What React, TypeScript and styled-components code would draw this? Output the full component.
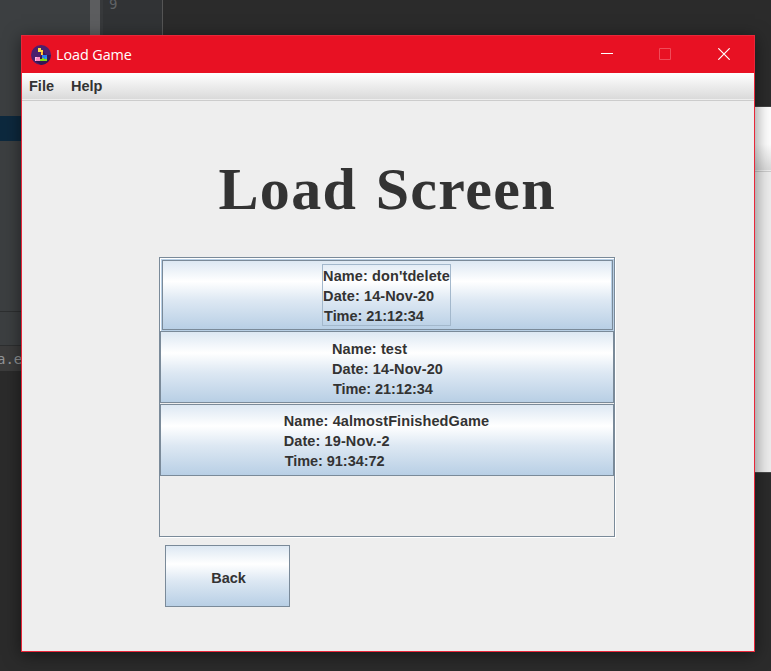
import React from "react";
import styled, { createGlobalStyle } from "styled-components";

const GlobalStyle = createGlobalStyle`
  body { margin: 0; background: #2b2b2b; overflow: hidden; }
  * { box-sizing: border-box; }
`;

const Desktop = styled.div`
  position: relative;
  display: flex;
  width: 771px;
  height: 671px;
  overflow: hidden;
  background: #2b2b2b;
`;

const SidePanel = styled.div`
  width: 90px;
  height: 371px;
  background: #3c3f41;
  display: flex;
  flex-direction: column;
`;

const PanelSection = styled.div<{ $h: number; $bg?: string; $line?: boolean }>`
  height: ${(p) => p.$h}px;
  flex: none;
  background: ${(p) => p.$bg ?? "#3c3f41"};
  border-bottom: ${(p) => (p.$line ? "1px solid #2d2f30" : "none")};
  font: 14px/26px "DejaVu Sans Mono", monospace;
  color: #929496;
  white-space: pre;
`;

const TabText = styled.span`
  margin-left: -3px;
`;

const Scrollbar = styled.div`
  width: 10px;
  height: 371px;
  background: #5c5d5f;
`;

const Gutter = styled.div`
  width: 63px;
  height: 371px;
  border-left: 3px solid #37393b;
  border-right: 1px solid #555;
  background: #313335;
  color: #606366;
  font: 14px/16px "DejaVu Sans Mono", monospace;
  padding-left: 6px;
`;

const LineNumber = styled.div`
  margin-top: -4px;
`;

const RearWindow = styled.div`
  position: absolute;
  left: 700px;
  top: 106px;
  width: 90px;
  height: 367px;
  border-top: 1px solid #444;
  border-bottom: 1px solid #4a4a4a;
  background: #eee;
`;

const RearTitle = styled.div`
  height: 37px;
  background: #fff;
`;

const RearMenu = styled.div`
  height: 28px;
  background: linear-gradient(#fff, #dadada 26px, #eee 26px, #eee 27px, #ccc 27px);
`;

const Window = styled.div`
  position: absolute;
  left: 21px;
  top: 35px;
  width: 734px;
  height: 617px;
  display: flex;
  flex-direction: column;
  border: 1px solid #e8273a;
  background: #eee;
  box-shadow: 0 3px 16px rgba(0, 0, 0, 0.5);
`;

const TitleBar = styled.div`
  height: 37px;
  flex: none;
  display: flex;
  align-items: center;
  padding-left: 9px;
  background: #e81123;
  color: #fff;
`;

const Caption = styled.div`
  margin: 0 auto 0 5px;
  font: 14.4px/20px "Open Sans", sans-serif;
  letter-spacing: -0.08px;
`;

const Control = styled.div<{ $w: number }>`
  width: ${(p) => p.$w}px;
  height: 36px;
  display: flex;
  align-self: flex-start;
  align-items: center;
  justify-content: center;
`;

const MenuBar = styled.div`
  height: 28px;
  flex: none;
  display: flex;
  gap: 17px;
  padding-left: 7px;
  background: linear-gradient(#fff, #dadada 26px, #eee 26px, #eee 27px, #ccc 27px);
  font: bold 14.5px/26px "Liberation Sans", Arial, sans-serif;
  color: #333;
`;

const Heading = styled.h1`
  margin: 54px 0 0 196.5px;
  height: 69px;
  font: bold 60px/69px "Liberation Serif", "Times New Roman", serif;
  letter-spacing: 1.35px;
  word-spacing: 2px;
  color: #333;
  white-space: nowrap;
`;

const SaveList = styled.div`
  width: 456px;
  height: 280px;
  margin: 33px 0 0 137px;
  flex: none;
  display: flex;
  flex-direction: column;
  border: 1px solid #7a8a99;
  box-shadow: 1px 1px 0 #fff;
`;

const MetalButton = styled.button`
  display: flex;
  align-items: center;
  justify-content: center;
  padding: 0;
  margin: 0;
  border: 1px solid #7a8a99;
  border-radius: 0;
  background: linear-gradient(#dde8f3, #fff 30%, #dde8f3 58%, #b8cfe5);
  color: #333;
  font: bold 14.5px/20px "Liberation Sans", Arial, sans-serif;
`;

const SaveButton = styled(MetalButton)`
  width: 454px;
  height: 72px;
  flex: none;
  & + & {
    margin-top: 1px;
  }
`;

const FocusedSave = styled.div`
  flex: none;
  height: 73px;
  padding: 2px 1px 0 2px;
  background: #fff;
  display: flex;
`;

const FocusedButton = styled(MetalButton)`
  width: 451px;
  height: 70px;
  outline: 1px solid #b8cfe5;
  box-shadow: inset -2px 1px 0 -1px #b8cfe5;
`;

const Details = styled.span<{ $focused?: boolean; $dx: number; $dy: number }>`
  display: flex;
  flex-direction: column;
  align-items: flex-start;
  text-align: left;
  white-space: nowrap;
  margin-left: ${(p) => p.$dx}px;
  margin-top: ${(p) => p.$dy}px;
  padding-top: ${(p) => (p.$focused ? 1 : 0)}px;
  height: ${(p) => (p.$focused ? "60px" : "auto")};
  outline: ${(p) => (p.$focused ? "1px solid #a3b8cc" : "none")};
`;

const DetailLine = styled.span`
  letter-spacing: 0.1px;
`;

const TimeLine = styled(DetailLine)`
  letter-spacing: -0.05px;
  margin-left: 1px;
`;

const BackButton = styled(MetalButton)`
  width: 125px;
  height: 62px;
  margin: 8px 0 0 143px;
  padding: 4px 0 0 2px;
`;

const GameIcon = () => (
  <svg width="20" height="20" viewBox="0 0 20 20">
    <circle cx="10" cy="10" r="10" fill="#4b206d" />
    <path d="M11 5l4 5h4.8a10 10 0 0 1-9.8 10L4 16l7-6z" fill="#351752" />
    <path d="M7 3h3v2h2v5h-2v-3h-3z" fill="#ffdc45" />
    <path d="M10 7h2v3h-1v-2h-1z" fill="#ffae2f" />
    <path d="M4 12h5v4h-5z" fill="#ff8bc2" />
    <path d="M4 12h2v1h-1v3h-1z" fill="#ffc5e3" />
    <path d="M11 10h5v4h-3v-1h-2z" fill="#287df0" />
    <path d="M9 14h2v-1h2v1h3v2h-7z" fill="#80df17" />
    <path d="M14 12h2v2h-2z" fill="#239de8" />
  </svg>
);

const saves = [
  { name: "test", date: "14-Nov-20", time: "21:12:34", dx: 1, dy: 3 },
  { name: "4almostFinishedGame", date: "19-Nov.-2", time: "91:34:72", dx: -1, dy: 1 },
];

export default function App() {
  return (
    <>
      <GlobalStyle />
      <Desktop>
        <SidePanel>
          <PanelSection $h={116} />
          <PanelSection $h={25} $bg="#0d293e" />
          <PanelSection $h={171} $line />
          <PanelSection $h={34} $line />
          <PanelSection $h={25} $bg="#3c3c3c"><TabText>a.e</TabText></PanelSection>
        </SidePanel>
        <Scrollbar />
        <Gutter><LineNumber>9</LineNumber></Gutter>
        <RearWindow>
          <RearTitle />
          <RearMenu />
        </RearWindow>
        <Window>
          <TitleBar>
            <GameIcon />
            <Caption>Load Game</Caption>
            <Control $w={58}>
              <svg width="12" height="12"><path d="M0 5.5h12" stroke="#fff" /></svg>
            </Control>
            <Control $w={58}>
              <svg width="12" height="12"><path d="M.5.5h11v11H.5z" fill="none" stroke="#f04c59" /></svg>
            </Control>
            <Control $w={60}>
              <svg width="12" height="12"><path d="M.3.3l11.4 11.4M11.7.3L.3 11.7" stroke="#fff" strokeWidth="1.2" /></svg>
            </Control>
          </TitleBar>
          <MenuBar>
            <span>File</span>
            <span>Help</span>
          </MenuBar>
          <Heading>Load Screen</Heading>
          <SaveList>
            <FocusedSave>
              <FocusedButton>
                <Details $focused $dx={-2} $dy={0}>
                  <DetailLine>Name: don'tdelete</DetailLine>
                  <DetailLine>Date: 14-Nov-20</DetailLine>
                  <TimeLine>Time: 21:12:34</TimeLine>
                </Details>
              </FocusedButton>
            </FocusedSave>
            {saves.map((s) => (
              <SaveButton key={s.name}>
                <Details $dx={s.dx} $dy={s.dy}>
                  <DetailLine>Name: {s.name}</DetailLine>
                  <DetailLine>Date: {s.date}</DetailLine>
                  <TimeLine>Time: {s.time}</TimeLine>
                </Details>
              </SaveButton>
            ))}
          </SaveList>
          <BackButton>Back</BackButton>
        </Window>
      </Desktop>
    </>
  );
}
